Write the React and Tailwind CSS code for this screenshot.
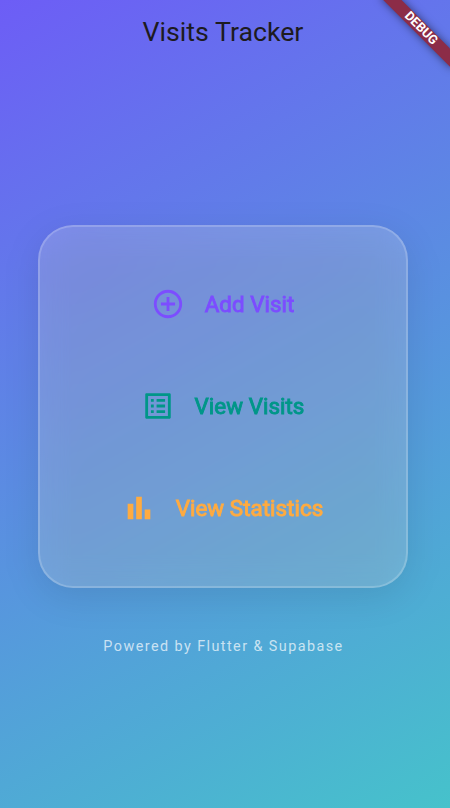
import React from "react";

function AddCircleIcon() {
  return (
    <svg className="size-[34px] shrink-0" viewBox="0 0 24 24" fill="currentColor">
      <path d="M13 7h-2v4H7v2h4v4h2v-4h4v-2h-4V7zm-1-5C6.48 2 2 6.48 2 12s4.480 10 10 10 10-4.480 10-10S17.520 2 12 2zm0 18c-4.410 0-8-3.590-8-8s3.590-8 8-8 8 3.590 8 8-3.590 8-8 8z" />
    </svg>
  );
}

function ListAltIcon() {
  return (
    <svg className="size-[34px] shrink-0" viewBox="0 0 24 24" fill="currentColor">
      <path d="M19 5v14H5V5h14m1.100-2H3.900c-.5 0-.9.4-.9.900v16.200c0 .4.4.900.9.900h16.200c.4 0 .900-.5.900-.900V3.900c0-.5-.5-.900-.900-.900zM11 7h6v2h-6V7zm0 4h6v2h-6v-2zm0 4h6v2h-6zM7 7h2v2H7zm0 4h2v2H7zm0 4h2v2H7z" />
    </svg>
  );
}

function BarChartIcon() {
  return (
    <svg className="size-[34px] shrink-0" viewBox="0 0 24 24" fill="currentColor">
      <path d="M4 9h4v11H4zM16 13h4v7h-4zM10 4h4v16h-4z" />
    </svg>
  );
}

function MenuButton({ icon, label, className }) {
  return (
    <button className={`flex h-[102px] items-center justify-center gap-5 ${className}`}>
      {icon}
      <span className="whitespace-nowrap text-[22.4px] leading-none font-normal tracking-[0.03px] [-webkit-text-stroke:0.9px_currentColor]">{label}</span>
    </button>
  );
}

export default function App() {
  return (
    <div className="relative flex h-[808px] w-[450px] flex-col overflow-hidden bg-[linear-gradient(150.9deg,#6D5DF6,#46C2CB)] pr-1 font-['Roboto',sans-serif]">
      <header className="flex h-16 shrink-0 items-center justify-center">
        <h1 className="text-[26.7px] leading-none text-[#1d1b20]">Visits Tracker</h1>
      </header>

      <main className="mt-[161px] flex flex-col items-center">
        <section className="relative h-[363px] w-[370px]">
          <div className="absolute inset-0 translate-y-[9px] rounded-[35px] bg-black/9 blur-[17px]" />
          <div className="relative flex h-full flex-col justify-center rounded-[35px] border-2 border-white/18 bg-white/19 pr-px pb-px backdrop-blur-[14px]">
            <MenuButton icon={<AddCircleIcon />} label="Add Visit" className="text-[#7c4dff]" />
            <MenuButton icon={<ListAltIcon />} label="View Visits" className="text-[#009688]" />
            <MenuButton icon={<BarChartIcon />} label="View Statistics" className="text-[#ffab40]" />
          </div>
        </section>
        <p className="mt-[51px] pl-px text-[14.4px] leading-4 tracking-[1.43px] text-white/70">Powered by Flutter &amp; Supabase</p>
      </main>

      <div className="absolute top-[22px] left-[370.500px] flex h-[12.500px] w-[100px] rotate-45 items-center justify-center bg-[#8c2c48] text-[12.8px] leading-none font-bold text-white shadow-[0_0_9px_rgba(0,0,0,0.5)]">
        DEBUG
      </div>
    </div>
  );
}
